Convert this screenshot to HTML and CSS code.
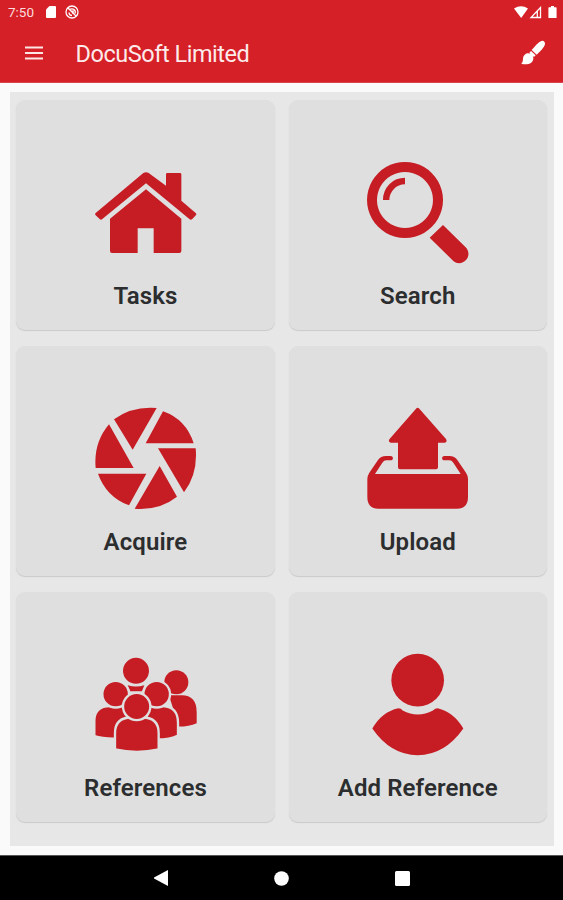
FILE: index.html
```html
<!DOCTYPE html>
<html lang="en">
<head>
<meta charset="utf-8">
<title>DocuSoft Limited</title>
<link rel="stylesheet" href="styles.css">
</head>
<body>
<header class="header">
  <div class="status">
    <span class="time">7:50</span>
    <svg class="sd" width="10" height="12" viewBox="0 0 10 12"><path d="M3.5 0H9q1 0 1 1v10q0 1-1 1H1q-1 0-1-1V3.5z"/></svg>
    <svg class="app" width="14" height="14" viewBox="0 0 14 14"><circle cx="7" cy="7" r="6"/><path d="M3 3l8 8M4 7.5q0 3 3 3M4.500 5q2-2 4.500-.5 2 1.500 1 4M6 6.200h3M7 8h2"/></svg>
    <svg class="signals" width="43" height="13" viewBox="0 0 43 13"><path d="M0 2.500Q7-2 14 2.500L7.200 12z"/><path class="cell" d="M26.500 1.500V11.500H17zM23.300 5V11.500"/><path d="M35 1.200h2V0h3v1.200h2q.6 0 .6.700v9.500q0 .6-.6.600h-7q-.6 0-.6-.6V1.900q0-.7.600-.7z"/></svg>
  </div>
  <div class="toolbar">
    <svg class="menu" width="18" height="14" viewBox="0 0 18 14"><path d="M0 1.500h18M0 7h18M0 12.500h18"/></svg>
    <h1>DocuSoft Limited</h1>
    <svg class="brush" width="26" height="26" viewBox="0 0 78 78"><path d="M73 5q4 4 1 11-3 7-9 13L50 44 35 30 49 14q9-9 15-11 6-2 9 2zM33 33l14 13-5 5-14-13zM25 40q13 1 15 13c1 13-11 21-27 20-5 0-9-2-9-4 5-2 4-6 5-13 1-10 8-16 16-16z"/></svg>
  </div>
</header>
<main class="page">
  <div class="grid">
    <section class="card">
      <svg class="icon" viewBox="33 9 330 330"><path d="M190 54q8-5 16 0L258 92V58q0-4 4-4h38q4 0 4 4v79l43 37q4 3 1 6l-11 12q-4 4-8 1L198 85 67 192q-4 4-8 0L47 181q-4-4 0-7z"/><path d="M198 103L304 191v97q0 6-6 6H221V220H173v74H96q-6 0-6-6V191z"/></svg>
      <h2>Tasks</h2>
    </section>
    <section class="card">
      <svg class="icon" viewBox="39 24 330 330"><path fill-rule="evenodd" d="M165 36a114 114 0 1 0 .1 0zM165 66a84 84 0 1 1-.1 0z"/><path d="M165 83v20a47 47 0 0 0-47 47H99a66 66 0 0 1 66-67zM279 225l68 67c12 13 10 28 1 38s-25 14-38 3l-71-70z"/></svg>
      <h2>Search</h2>
    </section>
    <section class="card">
      <svg class="icon" viewBox="33 27 330 330"><path d="M102 73Q156 33 230 39L158 164zM249 49Q318 73 341 145H197zM347 160Q354 236 312 292L234 160zM239 213L291 305Q238 347 164 341zM54 236H199L147 331Q79 306 54 236zM47 219Q40 144 87 88L161 219z"/></svg>
      <h2>Acquire</h2>
    </section>
    <section class="card">
      <svg class="icon" viewBox="39 27 330 330"><path d="M198 41q5-5 10 0l80 91q5 9-4 11H264v74q0 6-6 6H150q-6 0-6-6V143H122q-8-2-4-10z"/><path d="M122 183c9 0 9 13 0 13h-13q-7 0-12 7l-22 34H332l-22-34q-5-7-12-7h-15c-9 0-9-13 0-13h15q16 0 24 12l26 38q6 10 6 18v54q0 36-33 36H85q-33 0-33-36v-54q0-8 6-18l26-38q8-12 24-12z"/></svg>
      <h2>Upload</h2>
    </section>
    <section class="card">
      <svg class="icon" viewBox="48 28.500 330 330"><circle cx="183" cy="91" r="39"/><path d="M158 134q25 8 50 0l-7 18H166z"/><circle cx="304" cy="125" r="36"/><path d="M282 164H320q45 0 45 51v33q-23 10-54 10z"/><g class="cut"><path d="M58 287V242q0-45 47-45h51v95Q95 299 58 287z"/><circle cx="122" cy="161" r="40"/><path d="M205 197h59q45 2 45 50v38q-24 13-72 12z"/><circle cx="245" cy="161" r="40"/><path d="M120 327V278q0-47 49-47h34q48 0 48 47v49q-65 14-131 0z"/><circle cx="185" cy="198" r="41"/></g></svg>
      <h2>References</h2>
    </section>
    <section class="card">
      <svg class="icon" viewBox="99 28.500 330 330"><circle cx="263" cy="119" r="79"/><path d="M127 264Q155 214 205 203q8 0 13 7 45 24 91 0 6-7 14-7 49 12 77 61-56 80-137 80T127 264z"/></svg>
      <h2>Add Reference</h2>
    </section>
  </div>
</main>
<nav class="nav">
  <svg width="15" height="16" viewBox="0 0 15 16"><path d="M14 0v16L0 8.500v-1z"/></svg>
  <svg width="15" height="15" viewBox="0 0 15 15"><circle cx="7.500" cy="7.500" r="7.300"/></svg>
  <svg width="15" height="15" viewBox="0 0 15 15"><rect width="15" height="15" rx="1.500"/></svg>
</nav>
</body>
</html>
```
FILE: styles.css
```css
* { box-sizing: border-box; }
body {
  margin: 0;
  height: 900px;
  display: flex;
  flex-direction: column;
  background: #fafafa;
  font-family: Roboto, sans-serif;
  overflow: hidden;
}
svg { display: block; flex: none; fill: #fff; }
.header {
  height: 83px;
  flex: none;
  background: #d52027;
  color: #fff;
  border-bottom: 1px solid #d9474c;
}
.status {
  height: 24px;
  padding: 0 6px 0 8px;
  display: flex;
  align-items: center;
}
.time { width: 37.5px; font-size: 13.5px; color: #fbdcdd; }
.sd { margin-right: 9px; }
.app { fill: none; stroke: #fff; stroke-width: 1.3; }
.signals { margin-left: auto; }
.cell { fill: none; stroke: #fff; stroke-width: 1.3; }
.toolbar {
  height: 58px;
  padding: 0 17px 0 25px;
  display: flex;
  align-items: center;
}
.menu { stroke: #fde6e6; stroke-width: 1.8; }
h1 {
  margin: 2px auto 0 32.5px;
  font-size: 23.5px;
  font-weight: 400;
  letter-spacing: -0.46px;
  line-height: 28px;
  white-space: nowrap;
  color: #fdeaea;
}
.page { flex: 1; padding: 9px 9.5px 9px 10px; }
.grid {
  height: 754px;
  padding: 8px 6px;
  background: #e7e7e7;
  display: grid;
  grid-template-columns: 259px 258.5px;
  grid-auto-rows: 230px;
  align-content: start;
  gap: 15.75px 13.5px;
}
.card {
  background: #dfdfdf;
  border-radius: 9px;
  box-shadow: 0 1px 1px #c9c9c9;
  padding-top: 58px;
  display: flex;
  flex-direction: column;
  align-items: center;
}
.icon { width: 110px; height: 110px; fill: #c61d24; }
.cut { stroke: #dfdfdf; stroke-width: 7; }
h2 {
  margin: 14px 0 0;
  font-size: 24px;
  line-height: 28px;
  font-weight: 600;
  letter-spacing: 0.1px;
  color: #2b2d2e;
  white-space: nowrap;
}
.nav {
  height: 45px;
  flex: none;
  background: #000;
  border-top: 1px solid #555;
  display: flex;
  justify-content: center;
  align-items: center;
  gap: 105.5px;
}
```
